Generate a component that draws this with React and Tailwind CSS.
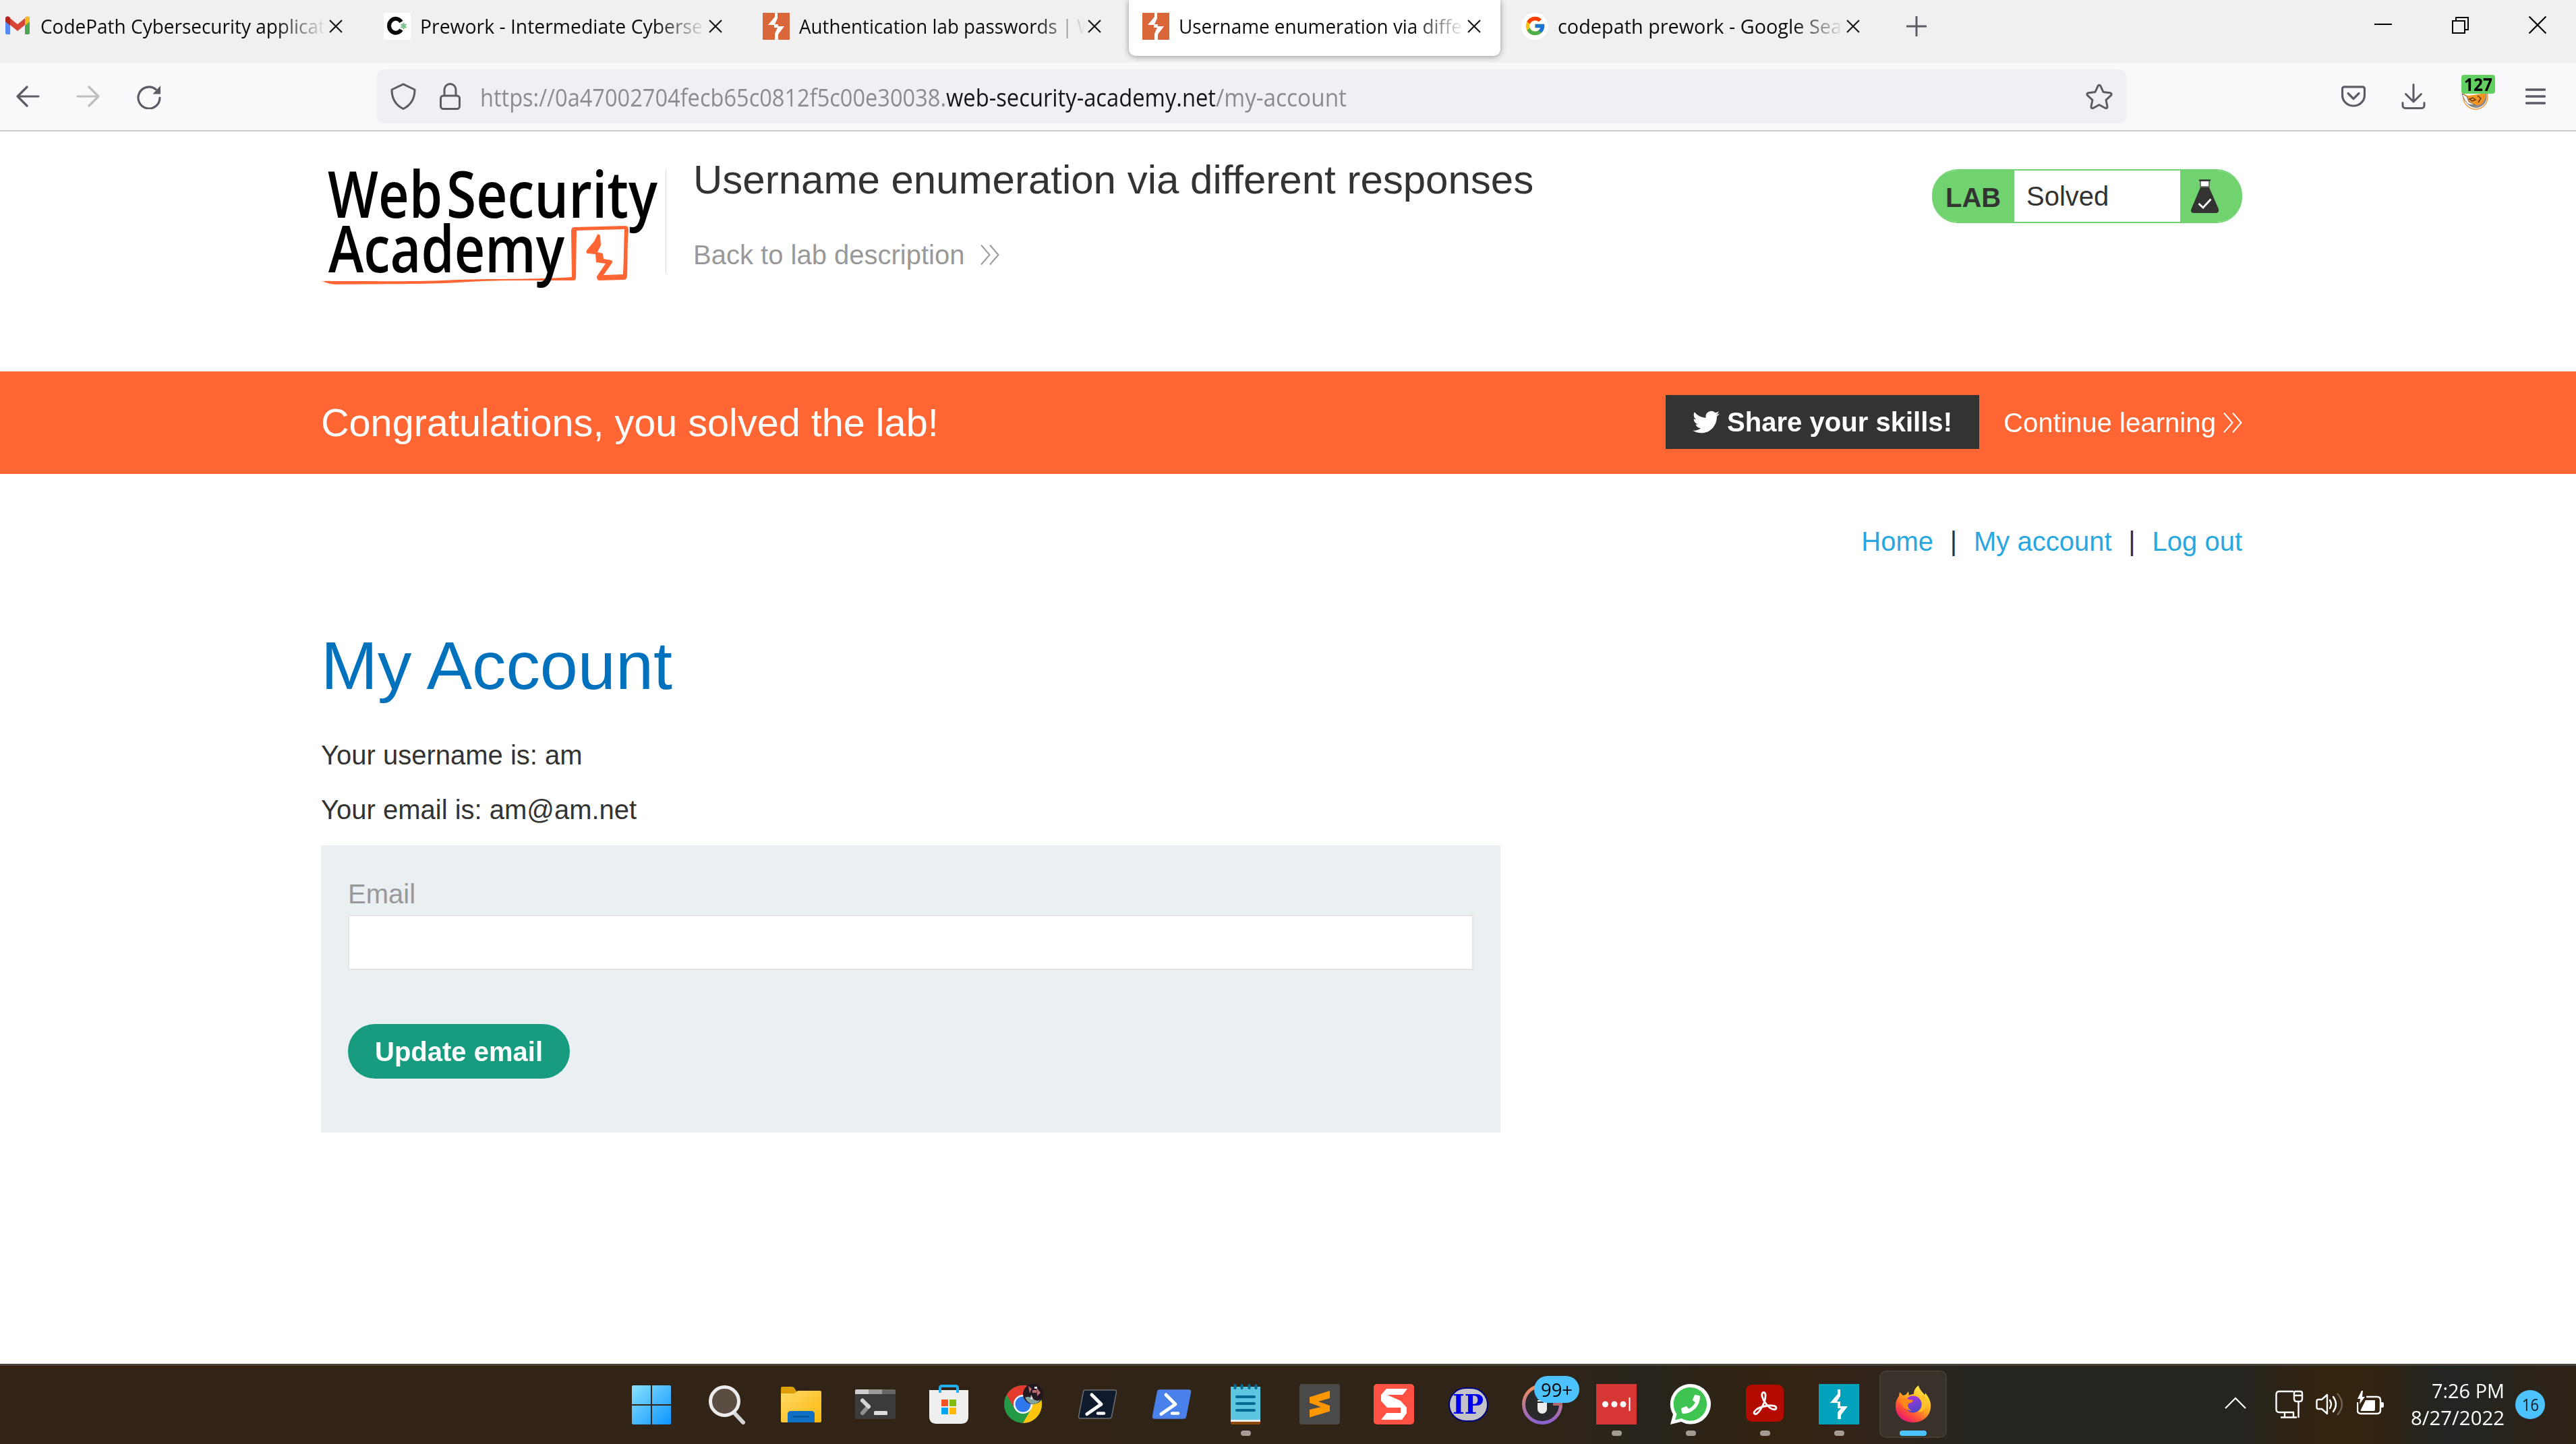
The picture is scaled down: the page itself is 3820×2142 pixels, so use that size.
import { useLayoutEffect, useRef } from "react";
import { FaTwitter, FaPhoneAlt } from "react-icons/fa";
import { FcGoogle } from "react-icons/fc";

/* Text that is condensed or stretched so that it fills a given width. */
function Fit({ w, className = "", children }) {
  const ref = useRef(null);
  useLayoutEffect(() => {
    const el = ref.current;
    el.style.transform = "none";
    el.style.width = "auto";
    const natural = el.getBoundingClientRect().width;
    el.style.transform = `scaleX(${w / natural})`;
    el.style.marginRight = `${w - natural}px`;
  }, [w]);
  return (
    <span ref={ref} className={"inline-block shrink-0 origin-left whitespace-pre " + className}>
      {children}
    </span>
  );
}

/* ---------- favicons ---------- */
function Gmail() {
  return (
    <svg viewBox="0 0 40 40" className="size-10">
      <path d="M2 10v24a2 2 0 0 0 2 2h5V16z" fill="#5a8af5" transform="translate(0 -4)" />
      <path d="M38 10v24a2 2 0 0 1-2 2h-5V16z" fill="#4fa552" transform="translate(0 -4)" />
      <path d="M9 10l11 9 11-9v10L20 29 9 20z" fill="#d64537" transform="translate(0 -2)" />
      <path d="M2 10c0-4 4-5 7-2v12l-7-6z" fill="#b3261e" transform="translate(0 -1)" />
      <path d="M38 10c0-4-4-5-7-2v12l7-6z" fill="#f2bd26" transform="translate(0 -1)" />
    </svg>
  );
}
function CodePath() {
  return (
    <svg viewBox="0 0 40 40" className="size-10">
      <rect width="40" height="40" fill="#fff" />
      <path d="M26 13.5A9.8 10.5 0 1 0 26 25" fill="none" stroke="#0a0a0a" strokeWidth="6" />
      <path d="M29.500 15v9M25.500 17l8 5M33.500 17l-8 5" stroke="#7cc28c" strokeWidth="2.400" />
    </svg>
  );
}
function Burp({ className = "size-10", bg = "#d9673a" }) {
  return (
    <svg viewBox="0 0 40 40" className={className}>
      <rect width="40" height="40" fill={bg} />
      <path d="M18 0h4v8l-4 9h5v3h9l-9 12v8h-5v-9l4-9h-5v-4H8l10-12z" fill="#fff" />
    </svg>
  );
}
function Google() {
  return (
    <span className="flex size-10 items-center justify-center rounded-full bg-white">
      <FcGoogle className="size-[33px]" />
    </span>
  );
}

function Tab({ icon, title, w, active }) {
  return (
    <div
      className={
        "flex h-[83px] w-[551px] shrink-0 items-center pb-[6px] pl-5 " +
        (active ? "rounded-b-[10px] bg-white shadow-[0_1px_8px_rgba(0,0,0,0.4)]" : "")
      }
    >
      {icon}
      <div className="ml-[14px] flex w-[425px] overflow-hidden text-[30px] leading-[50px] text-[#0c0c0d] [mask-image:linear-gradient(to_right,black_82%,transparent)]">
        <Fit w={w}>{title}</Fit>
      </div>
      <svg viewBox="0 0 20 20" className="ml-[3px] size-5 shrink-0">
        <path d="M1 1l18 18M19 1L1 19" stroke="#15141a" strokeWidth="2.200" />
      </svg>
    </div>
  );
}

function TabBar() {
  return (
    <div className="flex h-[93px] bg-[#f0f0f0]">
      <div className="-ml-[14px] flex gap-[11.5px]">
        <Tab icon={<Gmail />} title="CodePath Cybersecurity applicat" w={422} />
        <Tab icon={<CodePath />} title="Prework - Intermediate Cyberse" w={419} />
        <Tab icon={<Burp />} title="Authentication lab passwords | W" w={438} />
        <Tab icon={<Burp />} title="Username enumeration via diffe" w={420} active />
        <Tab icon={<Google />} title="codepath prework - Google Sea" w={421} />
      </div>
      <svg viewBox="0 0 30 30" className="ml-[40px] mt-6 size-[30px]">
        <path d="M15 1v28M1 15h28" stroke="#5b5b66" strokeWidth="3" strokeLinecap="round" />
      </svg>
      <div className="ml-auto mr-[44px] mt-6 flex h-[26px]">
        <svg viewBox="0 0 26 26" className="mr-[89px] size-[26px]">
          <path d="M0 12h26" stroke="#000" strokeWidth="2" />
        </svg>
        <svg viewBox="0 0 26 26" className="mr-[88px] size-[26px]">
          <path d="M1 7h18v18H1zM6 7V2h18v18h-5" fill="none" stroke="#000" strokeWidth="2" />
        </svg>
        <svg viewBox="0 0 26 26" className="size-[26px]">
          <path d="M0.500 0.500l25 25M25.500 0.500l-25 25" stroke="#000" strokeWidth="2.200" />
        </svg>
      </div>
    </div>
  );
}

function Fox() {
  return (
    <div className="relative h-[52px] w-[50px]">
      <svg viewBox="0 0 50 52" className="h-[52px] w-[50px]">
        <circle cx="21" cy="33" r="18" fill="#fff" stroke="#f29a3c" strokeWidth="1.500" />
        <path d="M36 24c5 12-1 24-14 25-7 0-12-4-14-8 8 5 18 4 22-2s5-10 6-15z" fill="#8c8c8c" />
        <path d="M0 27l10 4 20-3 6-3c1 8-2 15-7 19-9 3-17-1-21-7z" fill="#f39426" />
        <path d="M1 28l7 4 3 8 10 5-10-1c-5-4-8-9-10-16z" fill="#fff" stroke="#555" strokeWidth="0.800" />
        <path d="M12 36l5-2 4 3-5 2zM24 31l5 4-4 6" fill="none" stroke="#5a3a14" strokeWidth="1.500" />
      </svg>
      <span className="absolute left-0 top-0 flex h-7 w-[50px] items-center justify-center rounded-[4px] bg-[#62cf62] font-['Open_Sans'] text-[26px] font-bold leading-none text-black">
        <Fit w={42}>127</Fit>
      </span>
    </div>
  );
}

function Toolbar() {
  return (
    <div className="flex h-[102px] items-center border-b-2 border-[#cccccc] bg-[#f9f9fb] text-[#5b5b66]">
      <svg viewBox="0 0 36 32" className="ml-[23px] h-8 w-9">
        <path d="M34 16H3M17 2L3 16l14 14" fill="none" stroke="currentColor" strokeWidth="3.200" strokeLinecap="round" strokeLinejoin="round" />
      </svg>
      <svg viewBox="0 0 36 32" className="ml-[54px] h-8 w-9 text-[#bdbdc2]">
        <path d="M2 16h31M19 2l14 14-14 14" fill="none" stroke="currentColor" strokeWidth="3.200" strokeLinecap="round" strokeLinejoin="round" />
      </svg>
      <svg viewBox="0 0 36 36" className="ml-[54px] mt-[2px] size-9">
        <path d="M34 19A16 16 0 1 1 28 6.500" fill="none" stroke="currentColor" strokeWidth="3.200" strokeLinecap="round" />
        <path d="M35 1v12.500H23.500z" fill="currentColor" />
      </svg>
      <div className="ml-[320px] flex h-20 w-[2594px] items-center rounded-[10px] bg-[#f0f0f4] text-[#5b5b60]">
        <svg viewBox="0 0 38 40" className="ml-5 h-10 w-[38px]">
          <path d="M19 1.800L36 10c0 14-6 23-17 28.500C8 33 2 24 2 10z" fill="none" stroke="currentColor" strokeWidth="3" strokeLinejoin="round" />
        </svg>
        <svg viewBox="0 0 31 40" className="ml-[35px] h-10 w-[31px]">
          <rect x="1.500" y="19" width="28" height="19.500" rx="4" fill="none" stroke="currentColor" strokeWidth="3" />
          <path d="M7 19V10a8.500 8.500 0 0 1 17 0v9" fill="none" stroke="currentColor" strokeWidth="3" />
        </svg>
        <div className="ml-[29px] mt-[3px] flex text-[36px] leading-[60px] text-[#8b8b90]">
          <Fit w={691}>https://0a47002704fecb65c0812f5c00e30038.</Fit>
          <Fit w={400} className="text-[#15141a]">web-security-academy.net</Fit>
          <Fit w={194}>/my-account</Fit>
        </div>
        <svg viewBox="0 0 40 38" className="ml-auto mr-5 h-[38px] w-10">
          <path d="M20 2.200c1 0 1.600.6 2 1.500l4 8.800 10 1.200c2.200.3 2.800 2.400 1.300 3.900l-7.300 6.700 2 9.700c.4 2-1.400 3.300-3.200 2.300L20 31.500l-8.800 4.800c-1.800 1-3.600-.3-3.200-2.300l2-9.700-7.300-6.700c-1.500-1.500-.9-3.600 1.300-3.900l10-1.200 4-8.800c.4-.9 1-1.500 2-1.500z" fill="none" stroke="currentColor" strokeWidth="3" strokeLinejoin="round" />
        </svg>
      </div>
      <svg viewBox="0 0 36 32" className="ml-[319px] h-8 w-9">
        <path d="M4.500 1.800h27a3 3 0 0 1 3 3V14a16.500 16 0 0 1-33 0V4.800a3 3 0 0 1 3-3z" fill="none" stroke="currentColor" strokeWidth="3.200" />
        <path d="M10 11.500l8 8 8-8" fill="none" stroke="currentColor" strokeWidth="3.200" strokeLinecap="round" strokeLinejoin="round" />
      </svg>
      <svg viewBox="0 0 36 38" className="ml-[53px] h-[38px] w-9">
        <path d="M18 1.500v25M6.500 15.500L18 27l11.500-11.500M2 28.500v4c0 2 1.500 4 4 4h24c2.500 0 4-2 4-4v-4" fill="none" stroke="currentColor" strokeWidth="3" strokeLinecap="round" strokeLinejoin="round" />
      </svg>
      <div className="ml-[53px] mb-[12px]">
        <Fox />
      </div>
      <svg viewBox="0 0 30 26" className="ml-[45px] h-[26px] w-[30px]">
        <path d="M1.500 3h27M1.500 13h27M1.500 23h27" stroke="currentColor" strokeWidth="3.400" strokeLinecap="round" />
      </svg>
    </div>
  );
}

/* ---------- page ---------- */
function Logo() {
  return (
    <svg viewBox="0 0 510 190" className="h-[190px] w-[510px] overflow-visible" aria-label="Web Security Academy">
      <g fill="#000" fontFamily="Open Sans" fontWeight="600" fontSize="96">
        <text x="10" y="77.500" textLength="170" lengthAdjust="spacingAndGlyphs">Web</text>
        <text x="186" y="77.500" textLength="313" lengthAdjust="spacingAndGlyphs">Security</text>
      </g>
      <path
        d="M2 173c4-2 10-1 20-1 80 0 130 1 180-2 60-2 110 0 170-4l-1-68c0-4 2-6 5-6l75-2c4 0 5 3 5 6-2 22-1 45-2 68 0 4-2 6-6 6l-34 1c-4 0-5-2-5-6l13-19-14-2-1-12-12-1c-2-1-2-4 0-6l10-12 5-10c1-1 4 0 4 2l1 14-5 10 8 2 1 8 11 2c3 1 3 3 1 5l-12 17 29-1c1-22 1-44 2-67l-71 2-1 69c0 4-1 5-5 5-60 0-110-1-170 3-50 3-120 2-180 3-8 0-17-3-21-5z"
        fill="#ff6633"
      />
      <text x="11" y="158.500" fill="#000" fontFamily="Open Sans" fontWeight="600" fontSize="96" textLength="350" lengthAdjust="spacingAndGlyphs">Academy</text>
    </svg>
  );
}

function Chevrons({ className }) {
  return (
    <svg viewBox="0 0 28 30" className={"h-[30px] w-7 " + className}>
      <path d="M1 0.500L13.500 15 1 29.500M14 0.500L26.500 15 14 29.500" fill="none" stroke="currentColor" strokeWidth="2" />
    </svg>
  );
}

function Header() {
  return (
    <header className="flex h-[356px] pl-[476px] pr-[495px]">
      <div className="flex h-[211px] items-start border-transparent">
        <div className="mt-[50px] w-[511px]">
          <Logo />
        </div>
        <div className="mt-14 h-[155px] w-px bg-[#dcdcdc]" />
      </div>
      <div className="ml-10 mt-9 whitespace-nowrap">
        <h2 className="text-[60px] leading-[72px] text-[#333332]">Username enumeration via different responses</h2>
        <div className="mt-[50px] flex h-[50px] items-center text-[40px] leading-[50px] text-[#999999]">
          Back to lab description
          <Chevrons className="ml-6" />
        </div>
      </div>
      <div className="ml-auto mt-14 flex h-20 w-[460px] overflow-hidden rounded-[38px] border-y-2 border-[#71d370] text-[40px] text-[#333332]">
        <div className="flex w-[122px] items-center bg-[#71d370] pl-[20px] pt-[3px] font-bold">LAB</div>
        <div className="flex flex-1 items-center bg-white pl-[18px]">Solved</div>
        <div className="w-[92px] bg-[#71d370] pl-4 pt-[13px]">
          <svg viewBox="0 0 42 50" className="h-[50px] w-[42px]">
            <path d="M14 2v9h13V2z" fill="#fff" stroke="#555" strokeWidth="1.500" />
            <path d="M13 1.500h15" stroke="#333332" strokeWidth="2.500" strokeLinecap="round" />
            <path d="M14 12h13l14 32c1 4-1 6-4 6H4c-3 0-5-2-3.500-6z" fill="#333332" />
            <path d="M11.500 36l6.500 6L29.500 29.500" fill="none" stroke="#fff" strokeWidth="2.800" />
          </svg>
        </div>
      </div>
    </header>
  );
}

function Banner() {
  return (
    <section className="flex h-[152px] items-center bg-[#ff6633] pl-[476px] pr-[495px] text-white">
      <p className="text-[57.6px] leading-[70px]">Congratulations, you solved the lab!</p>
      <button className="mb-[2px] ml-auto flex h-[80px] w-[465px] items-center whitespace-nowrap bg-[#333332] pl-10 text-[40px] font-bold">
        <FaTwitter className="mr-[11px] size-10 shrink-0" />
        <Fit w={334}>Share your skills!</Fit>
      </button>
      <a className="ml-9 flex items-center whitespace-nowrap text-[40px]">
        <Fit w={315}>Continue learning</Fit>
        <Chevrons className="ml-[11px]" />
      </a>
    </section>
  );
}

function Account() {
  return (
    <main className="flex h-[1320px] flex-col bg-white pl-[476px] pr-[495px] text-[40px] leading-[50px] text-[#333332]">
      <nav className="mt-[75px] flex justify-end whitespace-pre text-[#29a7df]">
        <a>Home</a>
        <span className="w-[60px] text-center text-[#333332]">|</span>
        <a>My account</a>
        <span className="w-[60px] text-center text-[#333332]">|</span>
        <a>Log out</a>
      </nav>
      <h1 className="mt-[99px] text-[101px] leading-[120px] text-[#0071bc]">
        <Fit w={521}>My Account</Fit>
      </h1>
      <p className="mt-[48px]">Your username is: am</p>
      <p className="mt-[31px]">Your email is: am@am.net</p>
      <form className="mt-[28px] flex h-[426px] w-[1749px] flex-col items-start bg-[#eaeff1] px-10 pt-[47px]">
        <label className="text-[#999999]">Email</label>
        <div className="mt-[6px] h-[82px] w-full border-2 border-[#e4e4e4] bg-white" />
        <button type="button" className="mt-20 flex h-[81px] w-[329px] items-center whitespace-nowrap rounded-[40px] bg-[#179c7f] pl-10 text-[40px] font-bold text-white">
          <Fit w={249}>Update email</Fit>
        </button>
      </form>
    </main>
  );
}

/* ---------- taskbar ---------- */
const S = "size-[60px] overflow-visible";

function IcoWindows() {
  return (
    <svg viewBox="0 0 60 60" className={S}>
      <defs>
        <linearGradient id="win" gradientUnits="userSpaceOnUse" x1="0" y1="0" x2="60" y2="60">
          <stop offset="0" stopColor="#8be3ff" />
          <stop offset="1" stopColor="#0a93ff" />
        </linearGradient>
      </defs>
      <path d="M2 2h26v28H0V4q0-2 2-2zM30 2h26q2 0 2 2v26H30zM0 32h28v28H2q-2 0-2-2zM30 32h28v26q0 2-2 2H30z" fill="url(#win)" />
    </svg>
  );
}
function IcoSearch() {
  return (
    <svg viewBox="0 0 60 60" className={S}>
      <path d="M42 43l13 14" stroke="#d4d4d6" strokeWidth="6" strokeLinecap="round" />
      <circle cx="27.500" cy="25.500" r="21" fill="#5a4d42" stroke="#ececee" strokeWidth="5" />
    </svg>
  );
}
function IcoFolder() {
  return (
    <svg viewBox="0 0 60 60" className={S}>
      <defs>
        <linearGradient id="fold" x1="0" y1="0" x2="1" y2="1">
          <stop offset="0" stopColor="#ffd968" />
          <stop offset="1" stopColor="#fbb90c" />
        </linearGradient>
      </defs>
      <g transform="translate(1 0)">
        <path d="M0 6q0-2 2-2h14q3 0 4 2l4 6v8H0z" fill="#dd9f06" />
        <path d="M0 14h20l5-4h33q2 0 2 2v43q0 2-2 2H2q-2 0-2-2z" fill="url(#fold)" />
        <path d="M10 57V45q0-5 5-5h30q5 0 5 5v12z" fill="#0f6fc4" />
        <path d="M18 48.500h24" stroke="#0a4a8f" strokeWidth="2" />
      </g>
    </svg>
  );
}
function IcoTerminal() {
  return (
    <svg viewBox="0 0 60 60" className={S}>
      <g transform="translate(1 0)">
        <rect y="8" width="60" height="44" rx="2" fill="#3b3b3b" />
        <path d="M0 15V10q0-2 2-2h18v7z" fill="#cdcdcd" />
        <path d="M20 8h20v7H20z" fill="#9c9c9c" />
        <path d="M40 8h18q2 0 2 2v5H40z" fill="#666" />
        <path d="M11 43l9-10" stroke="#909090" strokeWidth="6" strokeLinecap="round" />
        <path d="M11 24.500l9 9" stroke="#d4d4d4" strokeWidth="6" strokeLinecap="round" />
        <rect x="28" y="40" width="20" height="6" rx="1.500" fill="#dedede" />
      </g>
    </svg>
  );
}
function IcoStore() {
  return (
    <svg viewBox="0 0 60 60" className={S}>
      <path d="M1 9h58v39q0 11-11 11H12Q1 59 1 48z" fill="#efefef" />
      <path d="M17 13V6q0-3 3-3h20q3 0 3 3v7" fill="none" stroke="#23b0ef" strokeWidth="4" />
      <path d="M19 23h10v10H19z" fill="#f35325" />
      <path d="M31 23h10v10H31z" fill="#81bc06" />
      <path d="M19 35h10v10H19z" fill="#05a6f0" />
      <path d="M31 35h10v10H31z" fill="#ffba08" />
    </svg>
  );
}
function IcoChrome() {
  return (
    <svg viewBox="0 0 60 60" className={S}>
      <circle cx="30" cy="30" r="28" fill="#249a46" />
      <path d="M54.250 16H30l12 21-12 21A28 28 0 0 0 54.250 16z" fill="#fdc50d" />
      <path d="M5.750 16A28 28 0 0 1 54.250 16H30L18 37z" fill="#e33b2e" />
      <circle cx="30" cy="30" r="14" fill="#fff" />
      <circle cx="30" cy="30" r="11.500" fill="#2f78ee" />
      <circle cx="45" cy="15" r="15" fill="#221920" />
      <path d="M38 3l5 4-3 7zM50 5l6 8-5 5zM44 9h6v4h-6z" fill="#b96b70" />
      <path d="M33 20q6-3 12 2t11 1q-3 6-11 7-8-1-12-10z" fill="#86a59a" />
      <path d="M42 16l3 6-4 1zM47 4h4v3h-4z" fill="#e6e9ee" />
    </svg>
  );
}
function IcoPowerShell({ fill, stroke }) {
  return (
    <svg viewBox="0 0 60 60" className={S}>
      <path d="M12 9h44q3 0 2.500 3l-7 36q-.5 3-3.500 3H5q-3 0-2.500-3l7-36Q10 9 12 9z" fill={fill} stroke={stroke} strokeWidth="1.500" />
      <path d="M22 16l14 14L15 44.500" fill="none" stroke="#fff" strokeWidth="5" strokeLinecap="round" strokeLinejoin="round" />
      <path d="M31 43.500h9" stroke="#fff" strokeWidth="4.500" strokeLinecap="round" />
    </svg>
  );
}
function IcoNotepad() {
  return (
    <svg viewBox="0 0 60 60" className={S}>
      <path d="M8 56h44v2q0 2-2 2H10q-2 0-2-2z" fill="#8f4a0c" />
      <path d="M8 52h44v4H8z" fill="#eee" />
      <path d="M8 4h44v49H8z" fill="#5cc6e0" />
      <path d="M14.500 2v4M24.500 2v4M35.500 2v4M45.500 2v4M17 19h26M17 29h26M17 39h26" stroke="#056a90" strokeWidth="4" strokeLinecap="round" />
    </svg>
  );
}
function IcoSublime() {
  return (
    <svg viewBox="0 0 60 60" className={S}>
      <rect width="60" height="60" rx="4" fill="#4a4a4a" />
      <path d="M45 10v11l-17 5 17 6v8.500L15 49.500V38l17-4-17-6v-8.500z" fill="#ff9800" />
    </svg>
  );
}
function IcoSnagit() {
  return (
    <svg viewBox="0 0 60 60" className={S}>
      <rect width="60" height="60" rx="5" fill="#ff5245" />
      <path d="M11 16v9l9 1V16zM40 34l9 1v8l-9 1z" fill="#ffc9c4" />
      <path d="M19 7h31l-7 9H20l20 9 9 10v9L40 43v-8H20l-9-10V16zM19 43h30l-7 10H11z" fill="#fff" />
    </svg>
  );
}
function IcoIp() {
  return (
    <span className="flex size-[60px] items-center justify-center">
      <span className="flex h-[51px] w-[59px] items-center justify-center rounded-full border-2 border-[#00007c] bg-[#c4c4c8] font-['DejaVu_Serif'] text-[40px] font-bold leading-none text-[#0000f0]">
        <Fit w={46}>IP</Fit>
      </span>
    </span>
  );
}
function IcoMic() {
  return (
    <span className="relative block size-[60px]">
      <svg viewBox="0 0 60 60" className={S}>
        <defs>
          <linearGradient id="mic" x1="0" y1="0" x2="0" y2="1">
            <stop offset="0" stopColor="#f39158" />
            <stop offset="1" stopColor="#8d62cf" />
          </linearGradient>
        </defs>
        <circle cx="30" cy="30" r="27.500" fill="#29292b" stroke="url(#mic)" strokeWidth="5" />
        <path d="M46 28h14v4H46z" fill="#b3696c" />
        <rect x="23" y="12" width="14" height="32" rx="7" fill="#ececec" />
        <path d="M22 23h10M22 27h10" stroke="#29292b" strokeWidth="2" />
      </svg>
      <span className="absolute -top-3 left-[18px] flex h-10 w-[67px] items-center justify-center rounded-full bg-[#4cc2ff] text-[28px] leading-none text-black">
        <Fit w={47}>99+</Fit>
      </span>
    </span>
  );
}
function IcoDots() {
  return (
    <svg viewBox="0 0 60 60" className={S}>
      <rect width="60" height="60" fill="#d63634" />
      <circle cx="13.500" cy="30" r="4.500" fill="#fff" />
      <circle cx="27" cy="30" r="4.500" fill="#fff" />
      <circle cx="40" cy="30" r="4.500" fill="#fff" />
      <path d="M49.500 20v20" stroke="#fff" strokeWidth="2" />
    </svg>
  );
}
function IcoWhatsApp() {
  return (
    <span className="relative block size-[60px]">
      <svg viewBox="0 0 60 60" className={S}>
        <path d="M30 0a29.800 29.800 0 1 1-14 56L0 60l4-15A29.800 29.800 0 0 1 30 0z" fill="#fff" />
        <path d="M30 5a24.800 24.800 0 1 1-13.500 46L7 53.500l2.500-9A24.800 24.800 0 0 1 30 5z" fill="#3fc351" />
      </svg>
      <FaPhoneAlt className="absolute left-[16px] top-[16px] size-[28px] -scale-x-100 text-white" />
    </span>
  );
}
function IcoAcrobat() {
  return (
    <svg viewBox="0 0 60 60" className={S}>
      <rect x="2" y="1" width="56" height="55" rx="9" fill="#b30b00" />
      <path d="M28 12.500c4 0 4 7 1 15-3 7-7 14-11 16.500-3 2-5-1-3-3.500C18 36 27 33 36 32c6-.6 11 .5 11 3.500s-5 3-9 0C32 31 27 23 26 18c-.6-3 .3-5.500 2-5.500z" fill="none" stroke="#fff" strokeWidth="2.800" />
    </svg>
  );
}
function IcoBurp() {
  return (
    <svg viewBox="0 0 60 60" className={S}>
      <rect width="60" height="60" fill="#02a2bc" />
      <path d="M28 8h4v10l-5 8h5v7h11l-10 13v6h-5V42l5-6h-5v-8H17l11-13z" fill="#fff" />
    </svg>
  );
}
function IcoFirefox() {
  return (
    <svg viewBox="0 0 60 60" className={S}>
      <defs>
        <linearGradient id="ffx" x1="0.850" y1="0.100" x2="0.250" y2="1">
          <stop offset="0" stopColor="#fff045" />
          <stop offset="0.450" stopColor="#ffa51e" />
          <stop offset="0.750" stopColor="#ff4a3a" />
          <stop offset="1" stopColor="#e3127a" />
        </linearGradient>
        <linearGradient id="ffp" x1="0" y1="0" x2="0.500" y2="1">
          <stop offset="0" stopColor="#b833e1" />
          <stop offset="1" stopColor="#4f45c8" />
        </linearGradient>
      </defs>
      <path d="M38 2c1 6 6 10 9 14 1-1 1-2 1-3 6 8 9 14 8 22-1 13-12 22-26 22C15 57 4 47 4 33c0-7 2-11 5-15l1-6 5 5 4-1 4-5 1 6c4-2 6-2 7-2 0-6 3-10 7-13z" fill="url(#ffx)" />
      <circle cx="30" cy="30" r="12.500" fill="url(#ffp)" />
      <path d="M10 24c5-5 9-4 14-1l6 1c0 3-4 4-7 5-2 4 0 8 5 11-7-1-12-4-14-10z" fill="#ff8a1c" />
      <path d="M38 19c8 5 7 17-1 23 8-1 13-7 13-14 0-5-2-9-4-12z" fill="#ffc22a" />
    </svg>
  );
}

const apps = [
  { icon: <IcoWindows /> },
  { icon: <IcoSearch /> },
  { icon: <IcoFolder /> },
  { icon: <IcoTerminal /> },
  { icon: <IcoStore /> },
  { icon: <IcoChrome /> },
  { icon: <IcoPowerShell fill="#0f1a2c" stroke="#6a6f76" /> },
  { icon: <IcoPowerShell fill="#4a80ea" stroke="#4a80ea" /> },
  { icon: <IcoNotepad />, open: true },
  { icon: <IcoSublime /> },
  { icon: <IcoSnagit /> },
  { icon: <IcoIp /> },
  { icon: <IcoMic /> },
  { icon: <IcoDots />, open: true },
  { icon: <IcoWhatsApp />, open: true },
  { icon: <IcoAcrobat />, open: true },
  { icon: <IcoBurp />, open: true },
  { icon: <IcoFirefox />, active: true },
];

function Taskbar() {
  return (
    <footer className="flex h-[119px] border-t-[3px] border-[#4a433b] bg-[linear-gradient(to_right,#332416_0%,#302418_60%,#28241d_64%,#33230f_69%,#33241a_72%,#25241f_77%,#25241f_87%,#33230f_90%,#33230f_92%,#222523_95%,#2b231a_98%,#2f2318_100%)] text-white">
      <div className="ml-[917px] mt-[7px] flex gap-[10px]">
        {apps.map((app, i) => (
          <div
            key={i}
            className={
              "flex h-[100px] w-[100px] flex-col items-center rounded-[10px] border-2 pt-[18px] " +
              (app.active ? "border-[#453c32] bg-[#38322b]" : "border-transparent")
            }
          >
            {app.icon}
            {app.open && <span className="mt-[9px] h-2 w-[15px] rounded-full bg-[#a39c95]" />}
            {app.active && <span className="mt-[9px] h-2 w-10 rounded-full bg-[#4cc2ff]" />}
          </div>
        ))}
      </div>
      <div className="ml-auto flex h-[114px] items-center">
        <svg viewBox="0 0 32 18" className="mb-[4px] h-[18px] w-8">
          <path d="M1 17L16 2l15 15" fill="none" stroke="#fff" strokeWidth="2.200" />
        </svg>
        <svg viewBox="0 0 42 42" className="ml-[43px] h-[42px] w-[42px]">
          <path d="M27 2H6Q1.500 2 1.500 6.500v22Q1.500 33 6 33h22M14 33v7M27 33v7M8 40.500h24" fill="none" stroke="#fff" strokeWidth="2.400" />
          <path d="M30 2h7q3 0 3 3v8q0 4-4 4h-4q-4 0-4-4V5q0-3 2-3zM28 8h12M34.500 17v24" fill="none" stroke="#fff" strokeWidth="2.400" />
        </svg>
        <svg viewBox="0 0 42 36" className="ml-[18px] h-9 w-[42px]">
          <path d="M17 4L9 11H4q-2.500 0-2.500 2.500v9Q1.500 25 4 25h5l8 7zM21 12q4 6 0 12M26 7q8 11 0 22" fill="none" stroke="#fff" strokeWidth="2.400" strokeLinejoin="round" strokeLinecap="round" />
          <path d="M32 2q14 16 0 32" fill="none" stroke="#6d6256" strokeWidth="2.400" />
        </svg>
        <svg viewBox="0 0 42 36" className="ml-[19px] mb-[4px] h-9 w-[42px]">
          <path d="M14 9h16q5 0 5 5v15q0 5-5 5H6q-5 0-5-5V17" fill="none" stroke="#fff" strokeWidth="2.400" />
          <path d="M13 14h14v14q0 2-2 2H7q-2 0-1-2zM35 17h3q2 0 2 2v4q0 2-2 2h-3z" fill="#fff" />
          <path d="M7 0L1 12h4l-1 8 8-11H8l1-9z" fill="#fff" />
        </svg>
        <div className="ml-[39px] flex w-[138px] flex-col items-end text-[30px] leading-10">
          <Fit w={108}>7:26 PM</Fit>
          <Fit w={139}>8/27/2022</Fit>
        </div>
        <span className="ml-4 mr-[46px] flex h-[43px] w-11 items-center justify-center rounded-full bg-[#4cc2ff] text-[26px] leading-none text-[#0b1a24]">
          <Fit w={25}>16</Fit>
        </span>
      </div>
    </footer>
  );
}

export default function App() {
  return (
    <div className="flex h-[2142px] w-[3820px] flex-col overflow-hidden bg-white font-['Liberation_Sans',Arial,sans-serif]">
      <div className="font-['Open_Sans',sans-serif]">
        <TabBar />
        <Toolbar />
      </div>
      <Header />
      <Banner />
      <Account />
      <div className="font-['Open_Sans',sans-serif]">
        <Taskbar />
      </div>
    </div>
  );
}
